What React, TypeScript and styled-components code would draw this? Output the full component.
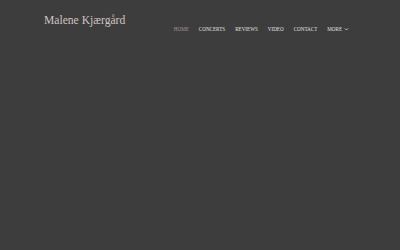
import React from "react";
import styled, { createGlobalStyle } from "styled-components";

const GlobalStyle = createGlobalStyle`
  html, body {
    margin: 0;
    padding: 0;
    background-color: #3d3d3d;
  }
  body {
    width: 400px;
    height: 250px;
    overflow: hidden;
    font-family: "Liberation Serif", "DejaVu Serif", serif;
  }
`;

const navItems = ["Home", "Concerts", "Reviews", "Video", "Contact"];

function App() {
  return (
    <>
      <GlobalStyle />
      <Page>
        <Header>
          <SiteTitle>Malene Kjærgård</SiteTitle>
          <Nav>
            {navItems.map((item, index) => (
              <NavLink key={item} active={index === 0}>
                {item}
              </NavLink>
            ))}
            <NavLink active={false}>
              More
              <Chevron viewBox="0 0 10 10">
                <path d="M2 3 L5 6 L8 3" />
              </Chevron>
            </NavLink>
          </Nav>
        </Header>
      </Page>
    </>
  );
}

export default App;

const Page = styled.div`
  width: 400px;
  height: 250px;
  background-color: #3d3d3d;
`;

const Header = styled.header`
  display: flex;
  align-items: flex-start;
  padding: 13px 51px 0 44px;
`;

const SiteTitle = styled.h1`
  margin: 0;
  color: #d2c2c2;
  font-size: 11.6px;
  font-weight: 400;
  line-height: 16px;
  letter-spacing: 0;
`;

const Nav = styled.nav`
  display: flex;
  align-items: center;
  gap: 10px;
  margin-left: auto;
  margin-top: 12px;
`;

const NavLink = styled.a<{ active: boolean }>`
  display: flex;
  align-items: center;
  gap: 2px;
  color: ${(props) => (props.active ? "#a89292" : "#e0e0e0")};
  font-size: 5.1px;
  line-height: 8px;
  letter-spacing: 0;
  text-transform: uppercase;
  text-decoration: none;
  cursor: pointer;
`;

const Chevron = styled.svg`
  width: 5px;
  height: 5px;
  fill: none;
  stroke: #e0e0e0;
  stroke-width: 1.7;
`;
